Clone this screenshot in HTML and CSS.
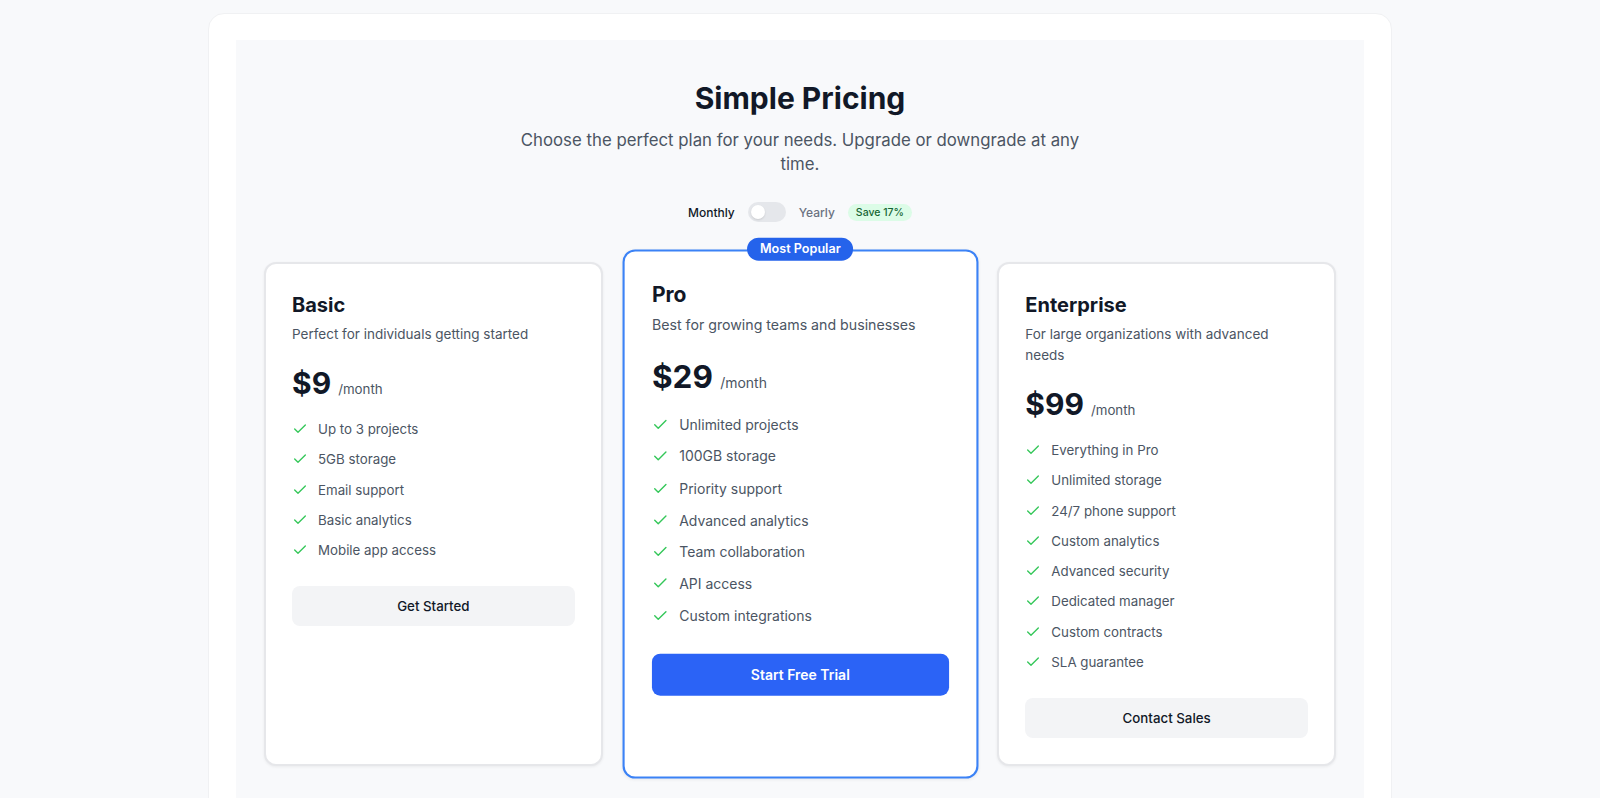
FILE: index.html
```html
<!DOCTYPE html>
<html lang="en">
<head>
<meta charset="utf-8">
<title>Simple Pricing</title>
<link rel="stylesheet" href="styles.css">
</head>
<body>
<div class="panel">
  <section class="pricing">
    <header class="intro">
      <h1 class="title">Simple Pricing</h1>
      <p class="subtitle">Choose the perfect plan for your needs. Upgrade or downgrade at any time.</p>
      <div class="billing">
        <span class="billing-label billing-label--active">Monthly</span>
        <span class="switch"><span class="switch-knob"></span></span>
        <span class="billing-label">Yearly</span>
        <span class="save-badge">Save 17%</span>
      </div>
    </header>

    <div class="plans">
      <article class="plan">
        <h2 class="plan-name">Basic</h2>
        <p class="plan-desc">Perfect for individuals getting started</p>
        <div class="price"><span class="price-amount">$9</span><span class="price-period">/month</span></div>
        <ul class="features">
          <li class="feature"><svg class="check" viewBox="0 0 24 24"><polyline points="20 6 9 17 4 12"/></svg>Up to 3 projects</li>
          <li class="feature"><svg class="check" viewBox="0 0 24 24"><polyline points="20 6 9 17 4 12"/></svg>5GB storage</li>
          <li class="feature"><svg class="check" viewBox="0 0 24 24"><polyline points="20 6 9 17 4 12"/></svg>Email support</li>
          <li class="feature"><svg class="check" viewBox="0 0 24 24"><polyline points="20 6 9 17 4 12"/></svg>Basic analytics</li>
          <li class="feature"><svg class="check" viewBox="0 0 24 24"><polyline points="20 6 9 17 4 12"/></svg>Mobile app access</li>
        </ul>
        <button class="btn btn--secondary">Get Started</button>
      </article>

      <article class="plan plan--featured">
        <span class="popular-badge">Most Popular</span>
        <h2 class="plan-name">Pro</h2>
        <p class="plan-desc">Best for growing teams and businesses</p>
        <div class="price"><span class="price-amount">$29</span><span class="price-period">/month</span></div>
        <ul class="features">
          <li class="feature"><svg class="check" viewBox="0 0 24 24"><polyline points="20 6 9 17 4 12"/></svg>Unlimited projects</li>
          <li class="feature"><svg class="check" viewBox="0 0 24 24"><polyline points="20 6 9 17 4 12"/></svg>100GB storage</li>
          <li class="feature"><svg class="check" viewBox="0 0 24 24"><polyline points="20 6 9 17 4 12"/></svg>Priority support</li>
          <li class="feature"><svg class="check" viewBox="0 0 24 24"><polyline points="20 6 9 17 4 12"/></svg>Advanced analytics</li>
          <li class="feature"><svg class="check" viewBox="0 0 24 24"><polyline points="20 6 9 17 4 12"/></svg>Team collaboration</li>
          <li class="feature"><svg class="check" viewBox="0 0 24 24"><polyline points="20 6 9 17 4 12"/></svg>API access</li>
          <li class="feature"><svg class="check" viewBox="0 0 24 24"><polyline points="20 6 9 17 4 12"/></svg>Custom integrations</li>
        </ul>
        <button class="btn btn--primary">Start Free Trial</button>
      </article>

      <article class="plan">
        <h2 class="plan-name">Enterprise</h2>
        <p class="plan-desc">For large organizations with advanced needs</p>
        <div class="price"><span class="price-amount">$99</span><span class="price-period">/month</span></div>
        <ul class="features">
          <li class="feature"><svg class="check" viewBox="0 0 24 24"><polyline points="20 6 9 17 4 12"/></svg>Everything in Pro</li>
          <li class="feature"><svg class="check" viewBox="0 0 24 24"><polyline points="20 6 9 17 4 12"/></svg>Unlimited storage</li>
          <li class="feature"><svg class="check" viewBox="0 0 24 24"><polyline points="20 6 9 17 4 12"/></svg>24/7 phone support</li>
          <li class="feature"><svg class="check" viewBox="0 0 24 24"><polyline points="20 6 9 17 4 12"/></svg>Custom analytics</li>
          <li class="feature"><svg class="check" viewBox="0 0 24 24"><polyline points="20 6 9 17 4 12"/></svg>Advanced security</li>
          <li class="feature"><svg class="check" viewBox="0 0 24 24"><polyline points="20 6 9 17 4 12"/></svg>Dedicated manager</li>
          <li class="feature"><svg class="check" viewBox="0 0 24 24"><polyline points="20 6 9 17 4 12"/></svg>Custom contracts</li>
          <li class="feature"><svg class="check" viewBox="0 0 24 24"><polyline points="20 6 9 17 4 12"/></svg>SLA guarantee</li>
        </ul>
        <button class="btn btn--secondary">Contact Sales</button>
      </article>
    </div>
  </section>
</div>
</body>
</html>
```

FILE: styles.css
```css
* { box-sizing: border-box; }

html, body {
  margin: 0;
  padding: 0;
}

body {
  background: #f8f9fb;
  font-family: Inter, "Noto Sans", "Liberation Sans", sans-serif;
  color: #111827;
  -webkit-font-smoothing: antialiased;
}

.panel {
  width: 1184px;
  margin: 13px auto 0;
  background: #ffffff;
  border: 1px solid #f0f1f3;
  border-radius: 16px;
  padding: 26px 27px 40px;
  min-height: 820px;
}

.pricing {
  background: #f8f9fb;
  padding: 40px 28px 60px;
}

.intro {
  display: flex;
  flex-direction: column;
  align-items: center;
  text-align: center;
}

.title {
  margin: 0;
  font-size: 30px;
  line-height: 36px;
  font-weight: 700;
  color: #111827;
}

.subtitle {
  margin: 12px 0 0;
  max-width: 576px;
  font-size: 16.8px;
  line-height: 24px;
  color: #4b5563;
}

.billing {
  margin-top: 24px;
  display: flex;
  align-items: center;
  gap: 13px;
  height: 24px;
}

.billing-label {
  font-size: 12px;
  font-weight: 500;
  color: #6b7280;
}

.billing-label--active {
  color: #111827;
}

.switch {
  width: 38px;
  height: 20px;
  border-radius: 10px;
  background: #e5e7eb;
  display: flex;
  align-items: center;
  padding: 0 3px;
}

.switch-knob {
  width: 14px;
  height: 14px;
  border-radius: 50%;
  background: #ffffff;
  box-shadow: 0 1px 2px rgba(0, 0, 0, 0.12);
}

.save-badge {
  font-size: 10.5px;
  font-weight: 500;
  color: #166534;
  background: #dcfce7;
  border-radius: 999px;
  padding: 1px 8px;
  line-height: 15px;
}

.plans {
  margin-top: 38px;
  display: grid;
  grid-template-columns: repeat(3, 1fr);
  gap: 28px;
}

.plan {
  position: relative;
  background: #ffffff;
  border: 2px solid #e6e7ea;
  border-radius: 12px;
  padding: 27px 26px 26px;
  display: flex;
  flex-direction: column;
  box-shadow: 0 1px 3px rgba(0, 0, 0, 0.06);
}

.plan--featured {
  border-color: #3b82f6;
  transform: scale(1.05);
  z-index: 1;
}

.popular-badge {
  position: absolute;
  top: 0;
  left: 50%;
  transform: translate(-50%, -60%);
  background: #2563eb;
  color: #ffffff;
  font-size: 12px;
  font-weight: 600;
  line-height: 16px;
  padding: 3px 12px;
  border-radius: 999px;
  white-space: nowrap;
}

.plan-name {
  margin: 0;
  font-size: 20px;
  line-height: 28px;
  font-weight: 700;
  color: #111827;
}

.plan-desc {
  margin: 5px 0 0;
  font-size: 13.5px;
  line-height: 21px;
  color: #4b5563;
}

.price {
  margin-top: 18px;
  display: flex;
  align-items: baseline;
  gap: 7px;
  line-height: 40px;
}

.price-amount {
  font-size: 30px;
  font-weight: 700;
  color: #111827;
}

.price-period {
  font-size: 13.3px;
  color: #4b5563;
}

.features {
  list-style: none;
  margin: 10px 0 0;
  padding: 0;
  display: flex;
  flex-direction: column;
  gap: 10.3px;
}

.feature {
  display: flex;
  align-items: center;
  gap: 10px;
  font-size: 13.3px;
  line-height: 20px;
  color: #4b5563;
}

.check {
  width: 16px;
  height: 16px;
  flex: none;
  fill: none;
  stroke: #34c759;
  stroke-width: 2;
  stroke-linecap: round;
  stroke-linejoin: round;
}

.btn {
  margin-top: 26px;
  height: 40px;
  width: 100%;
  border: 0;
  border-radius: 8px;
  font-family: inherit;
  font-size: 13.3px;
  font-weight: 500;
  cursor: pointer;
}

.btn--secondary {
  background: #f3f4f6;
  color: #111827;
}

.btn--primary {
  background: #2b63f6;
  color: #ffffff;
  font-weight: 600;
}
```
